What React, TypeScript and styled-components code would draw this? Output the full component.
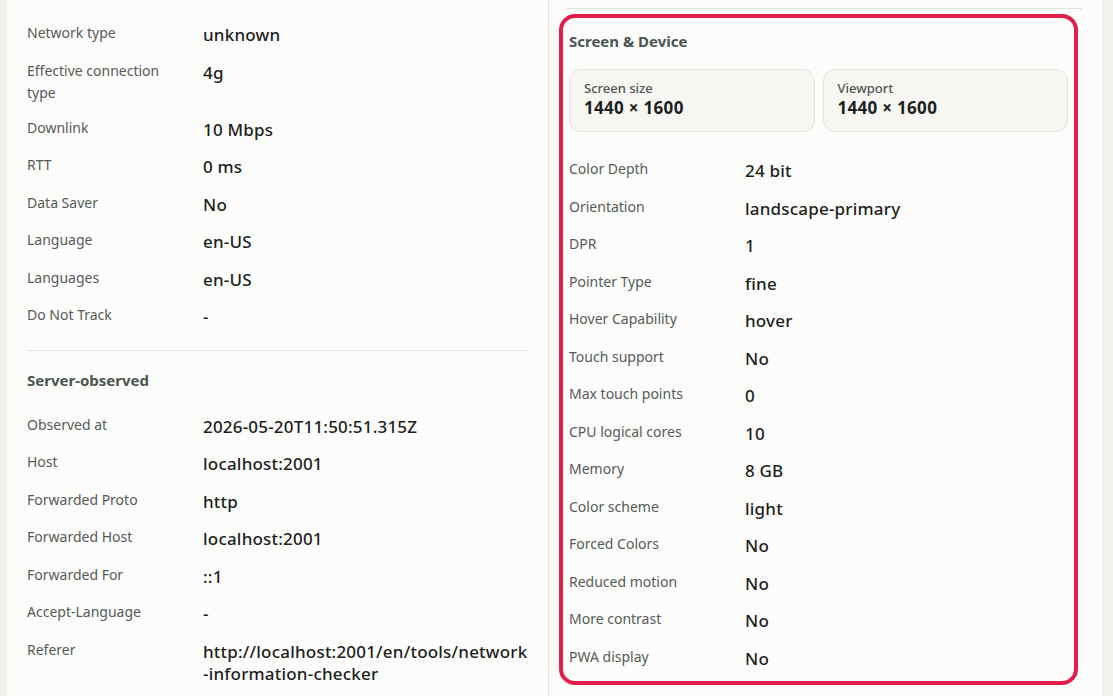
import styled, { createGlobalStyle } from 'styled-components'

const Global = createGlobalStyle`
  body {
    margin: 0;
    background: #f2f1ee;
    font-family: "Noto Sans", Inter, sans-serif;
    color: #1d1f1e;
  }
`

const Page = styled.div`
  display: grid;
  grid-template-columns: 541px 554px;
  padding-left: 7px;
  height: 696px;
  overflow: hidden;
`

const Panel = styled.section<{ $right?: boolean }>`
  background: #fcfcfa;
  padding: ${(p) => (p.$right ? '8px 20px 0 17px' : '16px 20px 0 20px')};
  border-left: ${(p) => (p.$right ? '1px solid #e6e4df' : 'none')};
`

const TopRule = styled.div`
  border-top: 1px solid #e3e1dc;
`

const Highlight = styled.div`
  margin: 5px 4px 0 -7px;
  border: 4px solid #e11d48;
  border-radius: 16px;
  padding: 12px 6px 4px 6px;
`

const Heading = styled.h3`
  margin: 0 0 17px 0;
  font-size: 15px;
  font-weight: 700;
  color: #4b5551;
  line-height: 22px;
`

const Cards = styled.div`
  display: grid;
  grid-template-columns: 1fr 1fr;
  gap: 8px;
  margin-bottom: 20px;
`

const Card = styled.div`
  background: #f7f6f3;
  border: 1px solid #e5e3de;
  border-radius: 12px;
  padding: 10px 14px 12px;
`

const CardLabel = styled.div`
  font-size: 13px;
  font-weight: 500;
  color: #4b5551;
  line-height: 17px;
`

const CardValue = styled.div`
  font-size: 17px;
  font-weight: 700;
  line-height: 22px;
  letter-spacing: 0.3px;
`

const Row = styled.div<{ $label: number }>`
  display: grid;
  grid-template-columns: ${(p) => p.$label}px 1fr;
  padding: 6px 0 7px;
  align-items: start;
`

const Label = styled.div`
  font-size: 14px;
  color: #555b58;
  line-height: 22px;
  padding-right: 16px;
`

const Value = styled.div`
  font-size: 17px;
  font-weight: 500;
  line-height: 22.5px;
  padding-top: 2px;
  letter-spacing: 0.2px;
  word-break: break-all;
`

const Divider = styled.hr`
  border: none;
  border-top: 1px solid #e3e1dc;
  margin: 14px 0 18px;
`

const clientRows: [string, string][] = [
  ['Network type', 'unknown'],
  ['Effective connection type', '4g'],
  ['Downlink', '10 Mbps'],
  ['RTT', '0 ms'],
  ['Data Saver', 'No'],
  ['Language', 'en-US'],
  ['Languages', 'en-US'],
  ['Do Not Track', '-'],
]

const serverRows: [string, string][] = [
  ['Observed at', '2026-05-20T11:50:51.315Z'],
  ['Host', 'localhost:2001'],
  ['Forwarded Proto', 'http'],
  ['Forwarded Host', 'localhost:2001'],
  ['Forwarded For', '::1'],
  ['Accept-Language', '-'],
  ['Referer', 'http://localhost:2001/en/tools/network-information-checker'],
]

const deviceRows: [string, string][] = [
  ['Color Depth', '24 bit'],
  ['Orientation', 'landscape-primary'],
  ['DPR', '1'],
  ['Pointer Type', 'fine'],
  ['Hover Capability', 'hover'],
  ['Touch support', 'No'],
  ['Max touch points', '0'],
  ['CPU logical cores', '10'],
  ['Memory', '8 GB'],
  ['Color scheme', 'light'],
  ['Forced Colors', 'No'],
  ['Reduced motion', 'No'],
  ['More contrast', 'No'],
  ['PWA display', 'No'],
]

const Rows = ({ rows }: { rows: [string, string][] }) => (
  <>
    {rows.map(([k, v]) => (
      <Row key={k} $label={176}>
        <Label>{k}</Label>
        <Value>{v}</Value>
      </Row>
    ))}
  </>
)

const App = () => {
  return (
    <Page>
      <Global />
      <Panel>
        <Rows rows={clientRows} />
        <Divider />
        <Heading>Server-observed</Heading>
        <Rows rows={serverRows} />
      </Panel>
      <Panel $right>
        <TopRule />
        <Highlight>
          <Heading>Screen &amp; Device</Heading>
          <Cards>
            <Card>
              <CardLabel>Screen size</CardLabel>
              <CardValue>1440 × 1600</CardValue>
            </Card>
            <Card>
              <CardLabel>Viewport</CardLabel>
              <CardValue>1440 × 1600</CardValue>
            </Card>
          </Cards>
          <Rows rows={deviceRows} />
        </Highlight>
      </Panel>
    </Page>
  )
}

export default App
